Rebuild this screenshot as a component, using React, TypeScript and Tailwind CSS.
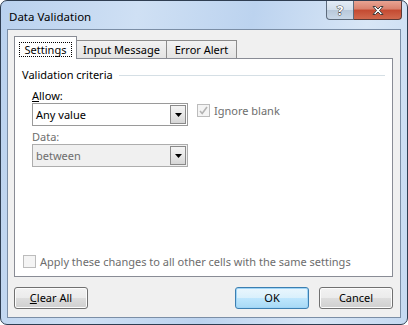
import { ReactNode } from "react";

function DropArrow() {
  return (
    <div className="w-[16px] h-[19px] my-[1px] mr-[1px] border border-[#8a8a8a] bg-gradient-to-b from-[#f4f4f4] via-[#e8e8e8] to-[#d6d6d6] flex items-center justify-center">
      <svg width="7" height="4" viewBox="0 0 7 4">
        <path d="M0 0h7L3.5 4z" fill="#000" />
      </svg>
    </div>
  );
}

function Combo({ value, disabled }: { value: string; disabled?: boolean }) {
  return (
    <div
      className={`w-[156px] h-[23px] border flex items-center ${
        disabled ? "bg-[#f0f0f0] border-[#adadad] text-[#6d6d6d]" : "bg-white border-[#9a9a9a] text-black"
      }`}
    >
      <span className="flex-1 pl-[3px] leading-[12px]">{value}</span>
      <DropArrow />
    </div>
  );
}

function Checkbox({ checked }: { checked?: boolean }) {
  return (
    <div className="w-[13px] h-[13px] border border-[#bcbcbc] bg-[#f4f4f4] flex items-center justify-center shrink-0">
      {checked && (
        <svg width="9" height="9" viewBox="0 0 9 9">
          <path d="M1 5l2.2 2.5L8 1" stroke="#b3b3b3" strokeWidth="1.6" fill="none" />
        </svg>
      )}
    </div>
  );
}

function WinButton({ children, isDefault }: { children: ReactNode; isDefault?: boolean }) {
  return (
    <button
      className={`w-[74px] h-[22px] rounded-[3px] border flex items-center justify-center text-black leading-[12px] ${
        isDefault
          ? "border-[#3c7fb1] shadow-[inset_0_0_0_1px_#9fd5f7] bg-[linear-gradient(#eaf6fd_0%,#d9f0fc_50%,#bee6fd_51%,#a7d9f5_100%)]"
          : "border-[#707070] shadow-[inset_0_0_0_1px_#fcfcfc] bg-[linear-gradient(#f2f2f2_0%,#ebebeb_50%,#dddddd_51%,#cfcfcf_100%)]"
      }`}
    >
      {children}
    </button>
  );
}

function Tab({ label, active, w }: { label: string; active?: boolean; w: string }) {
  if (active) {
    return (
      <div className={`${w} relative z-10 h-[23px] pt-[5px] flex justify-center border border-b-0 border-[#898c95] bg-white`}>
        <span className="h-[15px] px-[5px] border border-dotted border-black leading-[12px] pt-[1px]">{label}</span>
      </div>
    );
  }
  return (
    <div className={`${w} h-[19px] mt-[3px] -ml-[1px] flex items-center justify-center border border-b-0 border-[#8c8c8c] bg-gradient-to-b from-[#f2f2f2] to-[#e3e3e3] leading-[12px]`}>
      {label}
    </div>
  );
}

export default function App() {
  return (
    <div
      className="w-[408px] h-[325px] bg-white text-[11px] text-black select-none"
      style={{ fontFamily: '"Noto Sans", "Open Sans", sans-serif' }}
    >
      <div className="w-[408px] h-[325px] rounded-[7px] border border-[#2f3e52] bg-[linear-gradient(100deg,#b9d1ee_0%,#cfe0f4_30%,#bcd3ef_55%,#d8e6f6_80%,#c5d9f1_100%)] flex flex-col overflow-hidden">
        {/* title bar */}
        <div className="h-[28px] flex items-start">
          <span className="pl-[8px] pt-[7px] text-[11.5px] text-black">Data Validation</span>
          <div className="ml-auto mr-[5px] flex">
            <div className="w-[28px] h-[19px] border border-t-0 border-[#5d6b7c] rounded-bl-[4px] bg-[linear-gradient(#e3ecf6_0%,#d2deeb_50%,#b8c8da_51%,#c9d8e8_100%)] flex items-center justify-center">
              <svg width="14" height="17" viewBox="0 0 14 17" className="overflow-visible">
                <text x="7" y="13" textAnchor="middle" fontSize="13" fontWeight="bold" fontFamily="Noto Sans" fill="#fff" stroke="#444" strokeWidth="1" paintOrder="stroke">?</text>
              </svg>
            </div>
            <div className="w-[48px] h-[19px] border border-l-0 border-t-0 border-[#5d3a36] rounded-br-[4px] bg-[linear-gradient(#e8a493_0%,#d9816d_45%,#c44a31_50%,#d1694e_100%)] flex items-center justify-center">
              <svg width="14" height="11" viewBox="0 0 14 11">
                <path d="M2 1.5h2.5L7 4l2.5-2.5H12L8.5 5.5 12 9.5H9.5L7 7l-2.5 2.5H2l3.5-4z" fill="#fff" stroke="#3d3d3d" strokeWidth="1" strokeLinejoin="round" />
              </svg>
            </div>
          </div>
        </div>

        {/* client area */}
        <div className="mx-[6px] h-[289px] border border-[#7b8ea6] bg-[#f0f0f0] pl-[6px] pr-[7px] pt-[6px] flex flex-col">
          <div className="flex items-end">
            <Tab label="Settings" active w="w-[63px]" />
            <Tab label="Input Message" w="w-[91px]" />
            <Tab label="Error Alert" w="w-[71px]" />
          </div>
          <div className="-mt-[1px] h-[219px] border border-[#898c95] bg-white px-[7px] flex flex-col">
            <div className="mt-[10px] flex items-center gap-[6px]">
              <span className="leading-[12px]">Validation criteria</span>
              <div className="flex-1 h-px bg-[#d5dfe5]" />
            </div>

            <div className="pl-[10px] mt-[9px] flex flex-col">
              <span className="leading-[12px]">
                <span className="underline">A</span>llow:
              </span>
              <div className="mt-[1px] flex items-start gap-[9px]">
                <Combo value="Any value" />
                <div className="flex items-center gap-[4px] mt-[1px] text-[#6d6d6d]">
                  <Checkbox checked />
                  <span className="leading-[12px]">Ignore blank</span>
                </div>
              </div>
              <span className="mt-[5px] leading-[12px] text-[#6d6d6d]">Data:</span>
              <div className="mt-[1px]">
                <Combo value="between" disabled />
              </div>
            </div>

            <div className="mt-auto mb-[8px] pl-[1px] flex items-center gap-[4px] text-[#6d6d6d]">
              <Checkbox />
              <span className="leading-[12px]">Apply these changes to all other cells with the same settings</span>
            </div>
          </div>

          <div className="mt-[10px] flex items-center">
            <WinButton>
              <span>
                <span className="underline">C</span>lear All
              </span>
            </WinButton>
            <div className="ml-auto flex gap-[10px]">
              <WinButton isDefault>OK</WinButton>
              <WinButton>Cancel</WinButton>
            </div>
          </div>
        </div>
      </div>
    </div>
  );
}
